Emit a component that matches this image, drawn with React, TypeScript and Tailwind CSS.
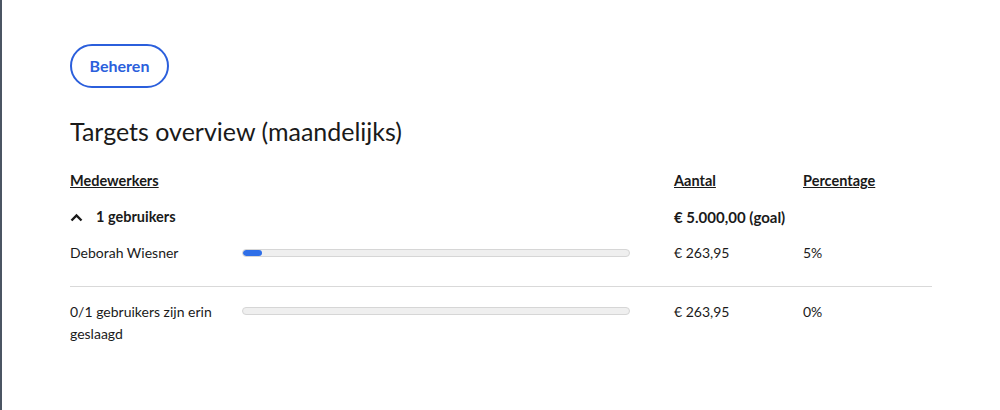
import React from "react";

function Bar({ pct }: { pct: number }) {
  return (
    <div className="w-[388px] h-[8px] rounded-full bg-[#efefef] border border-[#d6d6d6] overflow-hidden">
      {pct > 0 && (
        <div className="h-full bg-[#2f6fe8] rounded-full" style={{ width: `${pct}%` }} />
      )}
    </div>
  );
}

export default function App() {
  return (
    <div
      className="w-[1000px] h-[410px] bg-white border-l-2 border-[#4b5563] text-[#1a1a1a]"
      style={{ fontFamily: "Lato, 'Liberation Sans', sans-serif" }}
    >
      <div className="pl-[68px] pt-[44px] w-[930px]">
        <button className="h-[44px] w-[99px] rounded-full border-2 border-[#2b5fdc] text-[#2b5fdc] font-bold text-[16px]">
          Beheren
        </button>
        <h1 className="mt-[28px] text-[25px] leading-[30px] font-normal">Targets overview (maandelijks)</h1>
        <div className="mt-[24px] grid grid-cols-[172px_432px_129px_1fr] text-[14px] leading-[22px]">
          <div className="font-bold underline text-[14.5px]">Medewerkers</div>
          <div />
          <div className="font-bold underline text-[14.5px]">Aantal</div>
          <div className="font-bold underline text-[14.5px]">Percentage</div>

          <div className="mt-[14px] flex items-center gap-[13px] font-bold text-[14.5px]">
            <svg width="13" height="9" viewBox="0 0 13 9" fill="none">
              <path d="M1.5 7.5 L6.5 2.5 L11.5 7.5" stroke="#1a1a1a" strokeWidth="2.4" />
            </svg>
            <span>1 gebruikers</span>
          </div>
          <div className="mt-[14px]" />
          <div className="mt-[14px] font-bold text-[15px]">€ 5.000,00 (goal)</div>
          <div className="mt-[14px]" />

          <div className="mt-[14px]">Deborah Wiesner</div>
          <div className="mt-[14px] flex items-center"><Bar pct={5} /></div>
          <div className="mt-[14px]">€ 263,95</div>
          <div className="mt-[14px]">5%</div>

          <div className="col-span-4 mt-[22px] border-t border-[#d9d9d9]" />

          <div className="mt-[14px] pr-2">0/1 gebruikers zijn erin geslaagd</div>
          <div className="mt-[14px] pt-[6px]"><Bar pct={0} /></div>
          <div className="mt-[14px]">€ 263,95</div>
          <div className="mt-[14px]">0%</div>
        </div>
      </div>
    </div>
  );
}
